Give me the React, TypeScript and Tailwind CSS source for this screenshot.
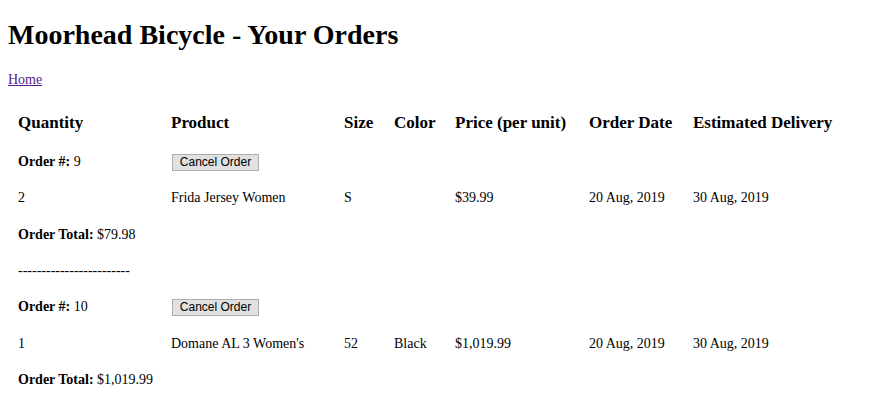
import React from 'react';

interface OrderLine {
  quantity: number;
  product: string;
  size: string;
  color: string;
  price: string;
  orderDate: string;
  delivery: string;
}

interface Order {
  id: number;
  total: string;
  lines: OrderLine[];
}

const orders: Order[] = [
  {
    id: 9,
    total: '$79.98',
    lines: [
      {
        quantity: 2,
        product: 'Frida Jersey Women',
        size: 'S',
        color: '',
        price: '$39.99',
        orderDate: '20 Aug, 2019',
        delivery: '30 Aug, 2019',
      },
    ],
  },
  {
    id: 10,
    total: '$1,019.99',
    lines: [
      {
        quantity: 1,
        product: "Domane AL 3 Women's",
        size: '52',
        color: 'Black',
        price: '$1,019.99',
        orderDate: '20 Aug, 2019',
        delivery: '30 Aug, 2019',
      },
    ],
  },
];

const headers = [
  { label: 'Quantity', width: 'w-[153px]' },
  { label: 'Product', width: 'w-[173px]' },
  { label: 'Size', width: 'w-[50px]' },
  { label: 'Color', width: 'w-[61px]' },
  { label: 'Price (per unit)', width: 'w-[134px]' },
  { label: 'Order Date', width: 'w-[104px]' },
  { label: 'Estimated Delivery', width: 'w-[162px]' },
];

const td = 'h-[36.3px] px-[10px] py-0 align-middle whitespace-nowrap';

export default function App() {
  return (
    <div className="min-h-[410px] bg-white px-[8px] text-black font-['Liberation_Serif','Times_New_Roman',serif] text-[14px] leading-[16px]">
      <h1 className="pt-[18.5px] mb-[21px] text-[28px] leading-[32px] font-bold">
        Moorhead Bicycle - Your Orders
      </h1>
      <a href="#" className="text-[#551a8b] underline">
        Home
      </a>

      <table className="mt-[15.5px] table-fixed border-collapse w-[837px]">
        <thead>
          <tr>
            {headers.map((h) => (
              <th
                key={h.label}
                className={`${h.width} h-[41px] px-[10px] pt-0 pb-[2px] text-left align-middle text-[17px] leading-[20px] font-bold whitespace-nowrap`}
              >
                {h.label}
              </th>
            ))}
          </tr>
        </thead>
        <tbody>
          {orders.map((order, idx) => (
            <React.Fragment key={order.id}>
              {idx > 0 && (
                <tr>
                  <td className={td}>------------------------</td>
                  <td className={td} colSpan={6}></td>
                </tr>
              )}
              <tr>
                <td className={td}>
                  <b>Order #:</b> {order.id}
                </td>
                <td className={td} colSpan={6}>
                  <button
                    type="button"
                    className="ml-[1px] w-[87px] h-[17px] p-0 border border-[#adadad] bg-[#e1e1e1] text-[12px] leading-[15px] text-black font-['Liberation_Sans',Arial,sans-serif] align-middle"
                  >
                    Cancel Order
                  </button>
                </td>
              </tr>
              {order.lines.map((line) => (
                <tr key={line.product}>
                  <td className={td}>{line.quantity}</td>
                  <td className={td}>{line.product}</td>
                  <td className={td}>{line.size}</td>
                  <td className={td}>{line.color}</td>
                  <td className={td}>{line.price}</td>
                  <td className={td}>{line.orderDate}</td>
                  <td className={td}>{line.delivery}</td>
                </tr>
              ))}
              <tr>
                <td className={td}>
                  <b>Order Total:</b> {order.total}
                </td>
                <td className={td} colSpan={6}></td>
              </tr>
            </React.Fragment>
          ))}
        </tbody>
      </table>
    </div>
  );
}
